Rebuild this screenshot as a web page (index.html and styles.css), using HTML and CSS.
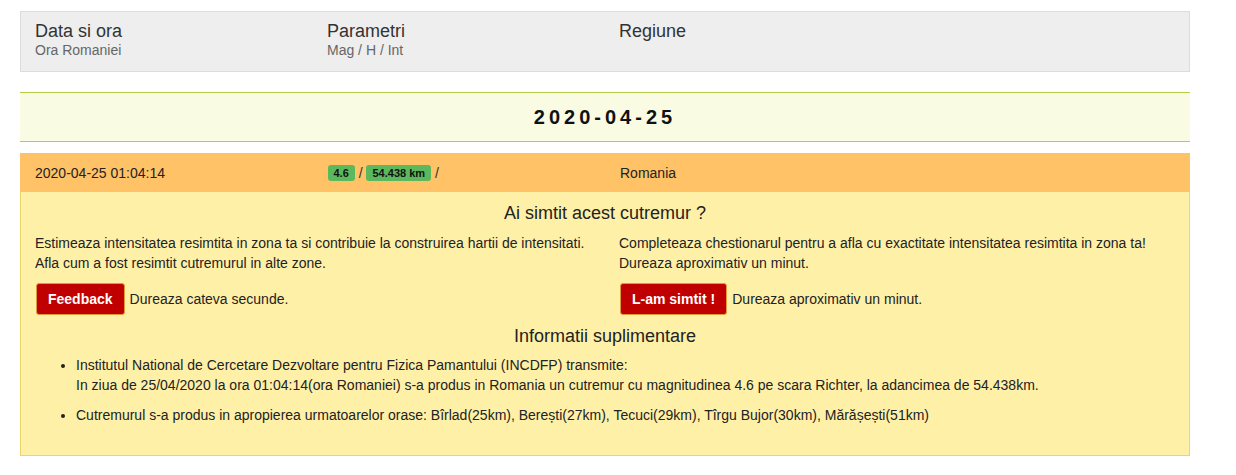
FILE: index.html
```html
<!DOCTYPE html>
<html>
<head>
<meta charset="utf-8">
<link rel="stylesheet" href="styles.css">
</head>
<body>
<div class="container">
  <div class="head">
    <div class="col"><div class="h-title">Data si ora</div><div class="h-sub">Ora Romaniei</div></div>
    <div class="col"><div class="h-title">Parametri</div><div class="h-sub">Mag / H / Int</div></div>
    <div class="col"><div class="h-title">Regiune</div></div>
    <div class="col"></div>
  </div>
  <div class="day">2020-04-25</div>
  <div class="event">
    <div class="col">2020-04-25 01:04:14</div>
    <div class="col"><span class="badge">4.6</span> <span class="sep">/</span> <span class="badge">54.438 km</span> <span class="sep">/</span></div>
    <div class="col">Romania</div>
    <div class="col"></div>
  </div>
  <div class="panel">
    <h3 class="panel-title">Ai simtit acest cutremur ?</h3>
    <div class="halves">
      <div class="half">
        <p>Estimeaza intensitatea resimtita in zona ta si contribuie la construirea hartii de intensitati.<br>Afla cum a fost resimtit cutremurul in alte zone.</p>
        <div class="act"><span class="btn">Feedback</span> Dureaza cateva secunde.</div>
      </div>
      <div class="half">
        <p>Completeaza chestionarul pentru a afla cu exactitate intensitatea resimtita in zona ta!<br>Dureaza aproximativ un minut.</p>
        <div class="act"><span class="btn">L-am simtit !</span> Dureaza aproximativ un minut.</div>
      </div>
    </div>
    <h3 class="panel-title info">Informatii suplimentare</h3>
    <ul class="list">
      <li>Institutul National de Cercetare Dezvoltare pentru Fizica Pamantului (INCDFP) transmite:<br>In ziua de 25/04/2020 la ora 01:04:14(ora Romaniei) s-a produs in Romania un cutremur cu magnitudinea 4.6 pe scara Richter, la adancimea de 54.438km.</li>
      <li>Cutremurul s-a produs in apropierea urmatoarelor orase: Bîrlad(25km), Berești(27km), Tecuci(29km), Tîrgu Bujor(30km), Mărășești(51km)</li>
    </ul>
  </div>
</div>
</body>
</html>
```
FILE: styles.css
```css
* { box-sizing: border-box; }
body {
  margin: 0;
  background: #fff;
  font-family: "Liberation Sans", Arial, sans-serif;
  font-size: 14px;
  color: #222;
}
.container {
  width: 1170px;
  margin-left: 20px;
  padding-top: 11px;
}
.head {
  display: grid;
  grid-template-columns: repeat(4, 1fr);
  background: #eeeeee;
  border: 1px solid #dcdcdc;
  height: 61px;
  padding-top: 8px;
}
.col { padding: 0 15px; }
.head .col { padding: 0 14px; }
.h-title { font-size: 18px; color: #333; line-height: 22px; }
.h-sub { font-size: 14px; color: #666; line-height: 16px; }
.day {
  margin-top: 20px;
  height: 50px;
  background: #f9fbe3;
  border-top: 1px solid #b7cc45;
  border-bottom: 1px solid #b7cc45;
  text-align: center;
  font-weight: bold;
  font-size: 20px;
  letter-spacing: 4px;
  line-height: 49px;
  color: #111;
}
.event {
  margin-top: 11px;
  display: grid;
  grid-template-columns: repeat(4, 1fr);
  background: #ffc266;
  height: 39px;
  align-items: center;
  padding-top: 1px;
  color: #222;
}
.badge {
  display: inline-block;
  background: #5cb85c;
  color: #111;
  font-size: 11px;
  font-weight: bold;
  line-height: 16px;
  padding: 0 6px;
  border-radius: 3px;
  vertical-align: 1px;
}
.sep { color: #333; }
.panel {
  background: #fff0a8;
  border: 1px solid #ecd66a;
  border-top: none;
  height: 264px;
  padding-top: 10px;
}
.panel-title {
  margin: 0;
  text-align: center;
  font-weight: normal;
  font-size: 18px;
  line-height: 22px;
  color: #222;
}
.halves {
  display: grid;
  grid-template-columns: 1fr 1fr;
  margin-top: 9px;
}
.half { padding: 0 14px; }
.half p { margin: 0; line-height: 20px; }
.act {
  margin-top: 10px;
  display: flex;
  align-items: center;
  gap: 5px;
}
.btn {
  display: inline-block;
  background: #c00000;
  color: #fff;
  font-weight: bold;
  font-size: 14px;
  padding: 0 11px;
  line-height: 30px;
  border: 1px solid #e09a3a;
  border-radius: 3px;
  margin-left: 1px;
}
.info { margin-top: 10px; }
.list {
  margin: 8px 0 0;
  padding-left: 55px;
}
.list li { line-height: 20px; margin-bottom: 10px; }
```
